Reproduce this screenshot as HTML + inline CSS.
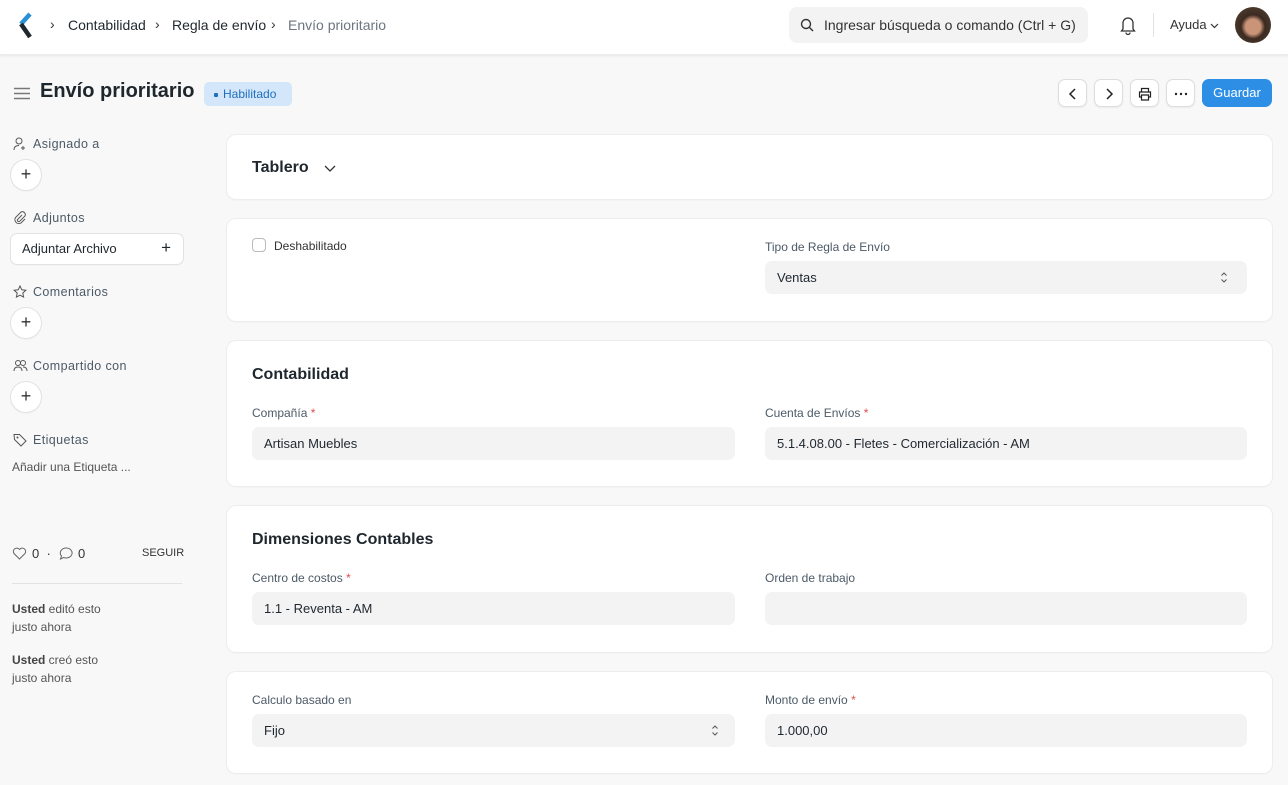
<!DOCTYPE html>
<html><head><meta charset="utf-8"><style>
*{box-sizing:border-box;margin:0;padding:0}
body{width:1288px;height:785px;overflow:hidden;background:#f8f8f8;font-family:"Liberation Sans",sans-serif;color:#1f272e;position:relative}
.nav{position:absolute;left:0;top:0;width:1288px;height:55px;background:#fff;box-shadow:0 1px 3px rgba(0,0,0,.08);border-bottom:1px solid #ececec}
.abs{position:absolute}
.bc{font-size:14px;top:17px;color:#1f272e}
.search{left:789px;top:7px;width:299px;height:36px;background:#f3f3f3;border-radius:8px;font-size:14px;color:#333}
.btn{position:absolute;top:79px;width:29px;height:28px;background:#fff;border:1px solid #ddd;border-radius:7px;box-shadow:0 1px 2px rgba(0,0,0,.06)}
.card{position:absolute;left:227px;width:1045px;background:#fff;border-radius:9px;box-shadow:0 0 0 1px #ededed,0 1px 2px rgba(0,0,0,.05)}
.lbl{position:absolute;font-size:12px;color:#4c5a67}
.req{color:#e24c4c}
.inp{position:absolute;height:33px;background:#f3f3f4;border-radius:7px;font-size:13px;padding:9px 12px;color:#1f272e}
.side{position:absolute;left:33px;font-size:12.5px;color:#4c5a67;letter-spacing:.4px}
.sic{position:absolute;left:13px}
.circ{position:absolute;left:11px;width:30px;height:30px;border-radius:50%;background:#fff;box-shadow:0 0 0 1px #e2e2e2,0 1px 2px rgba(0,0,0,.08);text-align:center;line-height:28px;font-size:18px;color:#333}
h3{position:absolute;font-size:16px;font-weight:bold;color:#1f272e}
.chev{position:absolute;font-size:14px;top:16px;color:#333}
</style></head><body>
<div class="nav">
<svg class="abs" style="left:17px;top:12px" width="16" height="27" viewBox="0 0 16 27"><path d="M13 2 L4 12" stroke="#2b8fd6" stroke-width="4.5"/><path d="M4 12 L13 25" stroke="#1f272e" stroke-width="4.5"/></svg>
<span class="chev" style="left:50px">›</span>
<div class="abs bc" style="left:68px">Contabilidad</div>
<span class="chev" style="left:155px">›</span>
<div class="abs bc" style="left:172px">Regla de envío</div>
<span class="chev" style="left:271px">›</span>
<div class="abs bc" style="left:288px;color:#6b7680">Envío prioritario</div>
<div class="abs search"><svg class="abs" style="left:11px;top:11px" width="14" height="14" viewBox="0 0 14 14"><circle cx="6" cy="6" r="4.5" stroke="#333" stroke-width="1.4" fill="none"/><path d="M9.5 9.5L13 13" stroke="#333" stroke-width="1.4"/></svg><span class="abs" style="left:35px;top:10px">Ingresar búsqueda o comando (Ctrl + G)</span></div>
<svg class="abs" style="left:1119px;top:15px" width="18" height="20" viewBox="0 0 18 20"><path d="M4 14V8a5 5 0 0 1 10 0v6l1.5 2h-13z M7 17.5a2 2 0 0 0 4 0" stroke="#333" stroke-width="1.3" fill="none"/></svg>
<div class="abs" style="left:1153px;top:13px;width:1px;height:24px;background:#e2e2e2"></div>
<div class="abs" style="left:1170px;top:17px;font-size:13px;color:#333">Ayuda</div>
<svg class="abs" style="left:1210px;top:23px" width="9" height="6"><path d="M1 1l3.5 3.5L8 1" stroke="#333" stroke-width="1.2" fill="none"/></svg>
<div class="abs" style="left:1235px;top:7px;width:36px;height:36px;border-radius:50%;background:radial-gradient(circle at 50% 55%,#c99478 0 28%,#3a2a20 45%,#5a4a3a 100%)"></div>
</div>
<svg class="abs" style="left:14px;top:87px" width="16" height="13"><path d="M0 1.5h16M0 6.5h16M0 11.5h16" stroke="#777" stroke-width="1.5"/></svg>
<div class="abs" style="left:40px;top:80px;font-size:20px;font-weight:bold">Envío prioritario</div>
<div class="abs" style="left:204px;top:82px;width:88px;height:24px;background:#d4e7fa;border-radius:5px;font-size:12px;color:#1f6fbd;padding:5px 0 0 10px"><span style="display:inline-block;width:4px;height:4px;background:#1f6fbd;border-radius:1px;vertical-align:middle;margin-right:5px"></span>Habilitado</div>
<div class="btn" style="left:1058px"><svg class="abs" style="left:9px;top:8px" width="10" height="12"><path d="M7 1L2 6l5 5" stroke="#222" stroke-width="1.5" fill="none"/></svg></div>
<div class="btn" style="left:1094px"><svg class="abs" style="left:9px;top:8px" width="10" height="12"><path d="M3 1l5 5-5 5" stroke="#222" stroke-width="1.5" fill="none"/></svg></div>
<div class="btn" style="left:1130px"><svg class="abs" style="left:7px;top:7px" width="14" height="14"><path d="M3.5 5V1.5h7V5M3.5 10H1.5V5h11v5h-2M3.5 8h7v5h-7z" stroke="#222" stroke-width="1.2" fill="none"/></svg></div>
<div class="btn" style="left:1166px"><svg class="abs" style="left:7px;top:12px" width="14" height="4"><circle cx="2" cy="2" r="1.2" fill="#222"/><circle cx="7" cy="2" r="1.2" fill="#222"/><circle cx="12" cy="2" r="1.2" fill="#222"/></svg></div>
<div class="abs" style="left:1202px;top:79px;width:70px;height:28px;background:#2d8ee6;border-radius:7px;color:#fff;font-size:13px;text-align:center;line-height:28px">Guardar</div>

<svg class="sic" style="top:137px" width="14" height="14" viewBox="0 0 14 14"><circle cx="6" cy="4" r="3" stroke="#555" fill="none"/><path d="M1 13c0-3 2-4.5 5-4.5M10 9v4M8 11h4" stroke="#555" fill="none"/></svg>
<div class="side" style="top:137px">Asignado a</div>
<div class="circ" style="top:160px">+</div>
<svg class="sic" style="top:211px" width="14" height="14" viewBox="0 0 14 14"><path d="M9 4L4.5 8.5a1.5 1.5 0 0 0 2 2L12 5a3 3 0 0 0-4-4L2.5 6.5a4 4 0 0 0 5.5 5.5L12 8" stroke="#555" fill="none"/></svg>
<div class="side" style="top:211px">Adjuntos</div>
<div class="abs" style="left:11px;top:234px;width:172px;height:30px;background:#fff;border-radius:6px;box-shadow:0 0 0 1px #e2e2e2,0 1px 2px rgba(0,0,0,.06);font-size:13px;padding:7px 0 0 11px">Adjuntar Archivo<span class="abs" style="right:12px;top:4px;font-size:17px">+</span></div>
<svg class="sic" style="top:285px" width="14" height="14" viewBox="0 0 14 14"><path d="M7 1l1.8 3.8 4 .5-3 2.8.8 4L7 10.2 3.4 12.1l.8-4-3-2.8 4-.5z" stroke="#555" fill="none"/></svg>
<div class="side" style="top:285px">Comentarios</div>
<div class="circ" style="top:308px">+</div>
<svg class="sic" style="top:359px" width="15" height="14" viewBox="0 0 15 14"><circle cx="5" cy="4" r="2.5" stroke="#555" fill="none"/><circle cx="10" cy="4" r="2.5" stroke="#555" fill="none"/><path d="M1 12c0-3 2-4 4-4s4 1 4 4M10 8c2 0 4 1 4 4" stroke="#555" fill="none"/></svg>
<div class="side" style="top:359px">Compartido con</div>
<div class="circ" style="top:382px">+</div>
<svg class="sic" style="top:433px" width="14" height="14" viewBox="0 0 14 14"><path d="M1 1.5h5.5L13 8l-5 5-6.5-6.5z" stroke="#555" fill="none"/><circle cx="4.5" cy="4.5" r="1" fill="#555"/></svg>
<div class="side" style="top:433px">Etiquetas</div>
<div class="abs" style="left:12px;top:460px;font-size:12px;color:#555">Añadir una Etiqueta ...</div>
<svg class="abs" style="left:12px;top:547px" width="15" height="13" viewBox="0 0 15 13"><path d="M7.5 12L2 6.5a3 3 0 0 1 5.5-4 3 3 0 0 1 5.5 4z" stroke="#666" fill="none"/></svg>
<div class="abs" style="left:32px;top:546px;font-size:13px;color:#333">0 &nbsp;·</div>
<svg class="abs" style="left:59px;top:547px" width="15" height="13" viewBox="0 0 15 13"><path d="M7.5 1a6 5 0 1 1-3 9.5L1.5 12l1-3A6 5 0 0 1 7.5 1z" stroke="#666" fill="none"/></svg>
<div class="abs" style="left:78px;top:546px;font-size:13px;color:#333">0</div>
<div class="abs" style="left:142px;top:547px;font-size:11px;color:#333">SEGUIR</div>
<div class="abs" style="left:12px;top:583px;width:170px;height:1px;background:#e2e2e2"></div>
<div class="abs" style="left:12px;top:600px;font-size:12px;color:#555;line-height:18px"><b style="color:#444">Usted</b> editó esto<br>justo ahora</div>
<div class="abs" style="left:12px;top:651px;font-size:12px;color:#555;line-height:18px"><b style="color:#444">Usted</b> creó esto<br>justo ahora</div>

<div class="card" style="top:135px;height:64px"><h3 style="left:25px;top:24px">Tablero</h3><svg class="abs" style="left:97px;top:30px" width="12" height="8"><path d="M1 1l5 5 5-5" stroke="#333" stroke-width="1.3" fill="none"/></svg></div>
<div class="card" style="top:219px;height:102px">
<div class="abs" style="left:25px;top:19px;width:14px;height:14px;border:1px solid #bbb;border-radius:4px"></div>
<div class="lbl" style="left:47px;top:20px;color:#333">Deshabilitado</div>
<div class="lbl" style="left:538px;top:21px">Tipo de Regla de Envío</div>
<div class="inp" style="left:538px;top:42px;width:482px">Ventas<svg class="abs" style="right:19px;top:10px" width="8" height="13"><path d="M1.5 4.5L4 2l2.5 2.5M1.5 8.5L4 11l2.5-2.5" stroke="#555" fill="none"/></svg></div>
</div>
<div class="card" style="top:341px;height:145px">
<h3 style="left:25px;top:25px">Contabilidad</h3>
<div class="lbl" style="left:25px;top:65px">Compañía <span class="req">*</span></div>
<div class="inp" style="left:25px;top:86px;width:483px">Artisan Muebles</div>
<div class="lbl" style="left:538px;top:65px">Cuenta de Envíos <span class="req">*</span></div>
<div class="inp" style="left:538px;top:86px;width:482px">5.1.4.08.00 - Fletes - Comercialización - AM</div>
</div>
<div class="card" style="top:506px;height:146px">
<h3 style="left:25px;top:25px">Dimensiones Contables</h3>
<div class="lbl" style="left:25px;top:65px">Centro de costos <span class="req">*</span></div>
<div class="inp" style="left:25px;top:86px;width:483px">1.1 - Reventa - AM</div>
<div class="lbl" style="left:538px;top:65px">Orden de trabajo</div>
<div class="inp" style="left:538px;top:86px;width:482px"></div>
</div>
<div class="card" style="top:672px;height:101px">
<div class="lbl" style="left:25px;top:21px">Calculo basado en</div>
<div class="inp" style="left:25px;top:42px;width:483px">Fijo<svg class="abs" style="right:16px;top:10px" width="8" height="13"><path d="M1.5 4.5L4 2l2.5 2.5M1.5 8.5L4 11l2.5-2.5" stroke="#555" fill="none"/></svg></div>
<div class="lbl" style="left:538px;top:21px">Monto de envío <span class="req">*</span></div>
<div class="inp" style="left:538px;top:42px;width:482px">1.000,00</div>
</div>
</body></html>
